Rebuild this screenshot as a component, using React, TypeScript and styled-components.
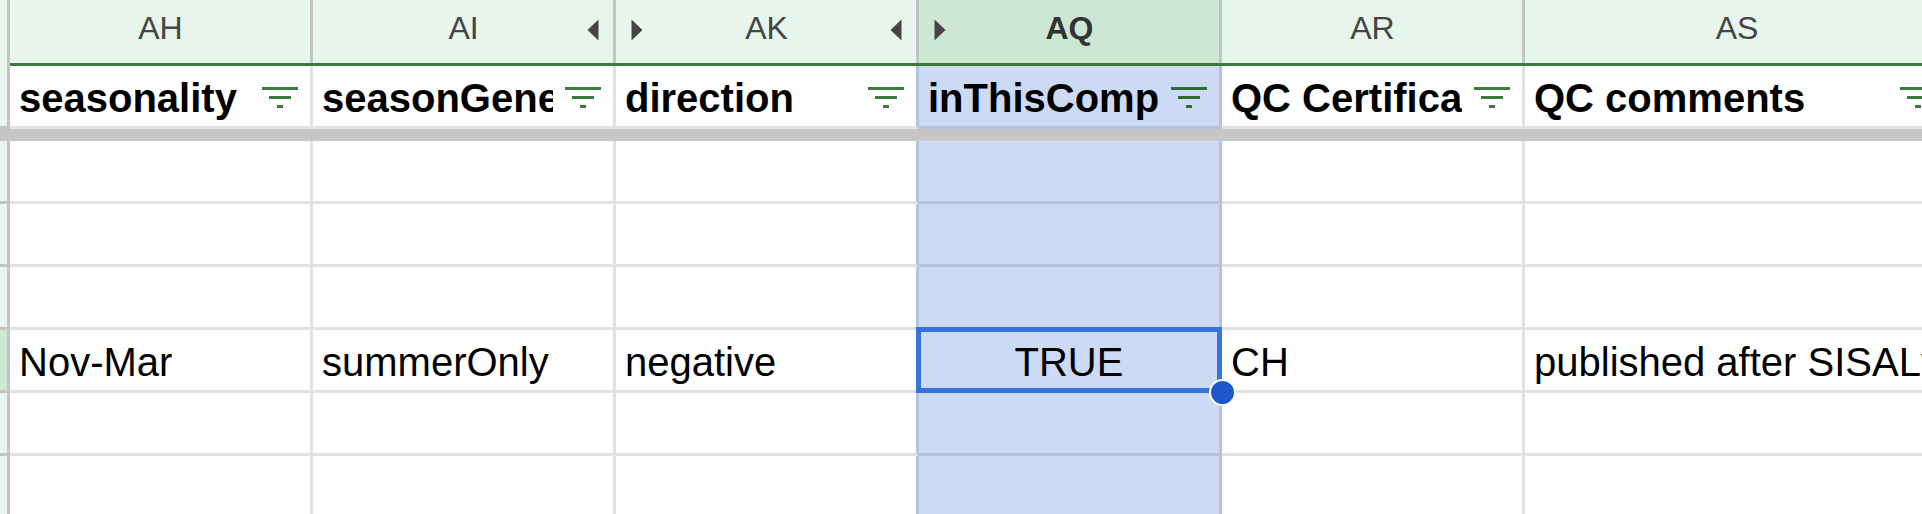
import React from "react";
import styled, { createGlobalStyle } from "styled-components";

const GlobalStyle = createGlobalStyle`
  html, body {
    margin: 0;
    padding: 0;
    background: #ffffff;
    overflow: hidden;
  }
  body {
    font-family: "Liberation Sans", Arial, sans-serif;
  }
  #root {
    width: 1922px;
    height: 514px;
    overflow: hidden;
  }
`;

const GRID = "#e1e1e1";
const HEAD_LINE = "#c4c4c4";
const SEL_LINE = "#b5c4de";
const GREEN_BG = "#e7f5ec";
const GREEN_SEL = "#cce8d4";
const BLUE_BG = "#ccdaf4";
const FILTER_GREEN = "#3a7b3d";

type Col = {
  id: string;
  width: number;
  header: string;
  arrowStart?: boolean;
  arrowEnd?: boolean;
  selected?: boolean;
};

const columns: Col[] = [
  { id: "AH", width: 300, header: "seasonality" },
  { id: "AI", width: 300, header: "seasonGeneral", arrowEnd: true },
  { id: "AK", width: 300, header: "direction", arrowStart: true, arrowEnd: true },
  { id: "AQ", width: 300, header: "inThisComp", arrowStart: true, selected: true },
  { id: "AR", width: 300, header: "QC Certification" },
  { id: "AS", width: 423, header: "QC comments" },
];

const dataRows: (string | null)[][] = [
  [],
  [],
  [],
  ["Nov-Mar", "summerOnly", "negative", "TRUE", "CH", "published after SISALv2"],
  [],
  [],
];
const ACTIVE_ROW = 3;

const Sheet = styled.div`
  display: flex;
  flex-direction: column;
  width: 1922px;
  height: 514px;
  overflow: hidden;
  background: #ffffff;
`;

const Row = styled.div`
  display: flex;
  flex: none;
`;

const Corner = styled.div`
  flex: none;
  box-sizing: border-box;
  width: 10px;
  height: 66px;
  background: ${GREEN_BG};
  border-right: 3px solid ${HEAD_LINE};
`;

const ColHeadStrip = styled.div`
  display: flex;
  flex: none;
  border-bottom: 3px solid #387a3c;
`;

const ColHead = styled.div<{ $w: number; $selected?: boolean }>`
  flex: none;
  box-sizing: border-box;
  width: ${(p) => p.$w + 3}px;
  height: 63px;
  border-right: 3px solid ${HEAD_LINE};
  background: ${(p) => (p.$selected ? GREEN_SEL : GREEN_BG)};
  display: grid;
  grid-template-columns: 1fr auto 1fr;
  align-items: center;
  padding: 0 14px 3px 15px;
`;

const ColLabel = styled.span<{ $selected?: boolean }>`
  font-size: 32px;
  line-height: 1;
  color: ${(p) => (p.$selected ? "#333333" : "#454545")};
  font-weight: ${(p) => (p.$selected ? 700 : 400)};
  padding-bottom: 4px;
`;

const ArrowSlot = styled.div<{ $end?: boolean }>`
  display: flex;
  justify-content: ${(p) => (p.$end ? "flex-end" : "flex-start")};
  align-items: center;
`;

const RowHead = styled.div<{ $active?: boolean; $h: number }>`
  flex: none;
  box-sizing: border-box;
  width: 10px;
  height: ${(p) => p.$h}px;
  background: ${(p) => (p.$active ? GREEN_SEL : GREEN_BG)};
  border-right: 3px solid ${HEAD_LINE};
  border-bottom: 3px solid ${HEAD_LINE};
`;

const Cell = styled.div<{
  $w: number;
  $sel?: boolean;
  $beforeSel?: boolean;
  $center?: boolean;
  $bold?: boolean;
}>`
  flex: none;
  box-sizing: border-box;
  width: ${(p) => p.$w + 3}px;
  height: 63px;
  border-right: 3px solid ${(p) => (p.$sel || p.$beforeSel ? SEL_LINE : GRID)};
  border-bottom: 3px solid ${(p) => (p.$sel ? SEL_LINE : GRID)};
  background: ${(p) => (p.$sel ? BLUE_BG : "#ffffff")};
  display: flex;
  align-items: center;
  justify-content: ${(p) => (p.$center ? "center" : "flex-start")};
  padding: 5px 9px 0 9px;
  font-size: 40px;
  font-weight: ${(p) => (p.$bold ? 700 : 400)};
  color: #000000;
`;

const HeaderCell = styled(Cell)`
  gap: 12px;
  padding-right: 12px;
`;

const HeadText = styled.span`
  flex: 1;
  min-width: 0;
  overflow: hidden;
  white-space: nowrap;
`;

const CellText = styled.span`
  overflow: hidden;
  white-space: nowrap;
`;

const FilterSvg = styled.svg`
  flex: none;
  width: 36px;
  height: 21px;
  margin-top: -3px;
`;

const FreezeBar = styled.div`
  flex: none;
  height: 12px;
  background: #c6c6c6;
`;

const ActiveCell = styled(Cell)`
  position: relative;
  z-index: 2;
`;

const SelectionBox = styled.div`
  position: absolute;
  left: -3px;
  top: -3px;
  right: -3px;
  bottom: -3px;
  border: 5px solid #3675e0;
  pointer-events: none;
`;

const FillHandle = styled.div`
  position: absolute;
  right: -19px;
  bottom: -18px;
  width: 23px;
  height: 23px;
  border-radius: 50%;
  background: #2057cf;
  border: 2.5px solid #ffffff;
`;

const Triangle: React.FC<{ dir: "left" | "right" }> = ({ dir }) => (
  <svg width="12" height="22" viewBox="0 0 12 22">
    {dir === "left" ? (
      <polygon points="11.5,0.5 0.5,11 11.5,21.5" fill="#454545" />
    ) : (
      <polygon points="0.5,0.5 11.5,11 0.5,21.5" fill="#454545" />
    )}
  </svg>
);

const FilterIcon: React.FC<{ selected?: boolean }> = ({ selected }) => (
  <FilterSvg viewBox="0 0 36 21">
    <g fill={selected ? "#2f6a36" : FILTER_GREEN}>
      <rect x="0" y="0" width="36" height="3" />
      <rect x="7" y="9" width="22" height="3" />
      <rect x="15" y="18" width="6" height="3" />
    </g>
  </FilterSvg>
);

const selIndex = columns.findIndex((c) => c.selected);

export default function App() {
  return (
    <>
      <GlobalStyle />
      <Sheet>
        <Row>
          <Corner />
          <ColHeadStrip>
            {columns.map((c) => (
              <ColHead key={c.id} $w={c.width} $selected={c.selected}>
                <ArrowSlot>{c.arrowStart && <Triangle dir="right" />}</ArrowSlot>
                <ColLabel $selected={c.selected}>{c.id}</ColLabel>
                <ArrowSlot $end>{c.arrowEnd && <Triangle dir="left" />}</ArrowSlot>
              </ColHead>
            ))}
          </ColHeadStrip>
        </Row>

        <Row>
          <RowHead $h={63} />
          {columns.map((c, i) => (
            <HeaderCell
              key={c.id}
              $w={c.width}
              $sel={c.selected}
              $beforeSel={i === selIndex - 1}
              $bold
            >
              <HeadText>{c.header}</HeadText>
              <FilterIcon selected={c.selected} />
            </HeaderCell>
          ))}
        </Row>

        <FreezeBar />

        {dataRows.map((row, r) => (
          <Row key={r}>
            <RowHead $h={63} $active={r === ACTIVE_ROW} />
            {columns.map((c, i) => {
              const value = row[i] ?? "";
              const common = {
                $w: c.width,
                $sel: c.selected,
                $beforeSel: i === selIndex - 1,
                $center: value === "TRUE" || value === "FALSE",
              };
              if (r === ACTIVE_ROW && c.selected) {
                return (
                  <ActiveCell key={c.id} {...common}>
                    <CellText>{value}</CellText>
                    <SelectionBox>
                      <FillHandle />
                    </SelectionBox>
                  </ActiveCell>
                );
              }
              return (
                <Cell key={c.id} {...common}>
                  <CellText>{value}</CellText>
                </Cell>
              );
            })}
          </Row>
        ))}
      </Sheet>
    </>
  );
}
